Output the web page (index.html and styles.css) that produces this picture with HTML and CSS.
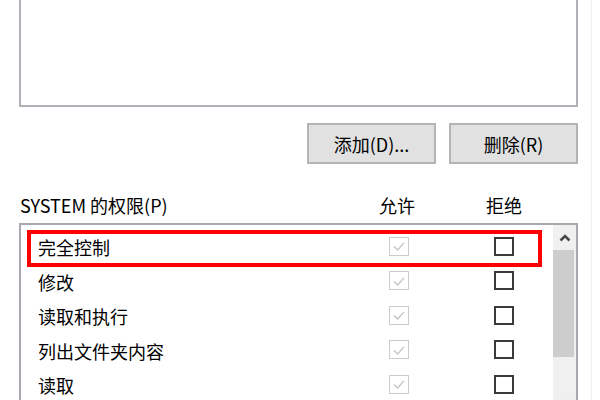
FILE: index.html
```html
<!DOCTYPE html>
<html lang="zh-CN">
<head>
<meta charset="utf-8">
<title>权限</title>
<link rel="stylesheet" href="styles.css">
</head>
<body>
<div class="page">
  <div class="userlist"></div>

  <div class="buttons">
    <div class="btn">添加(D)...</div>
    <div class="btn">删除(R)</div>
  </div>

  <div class="perm-head">
    <div class="perm-title">SYSTEM 的权限(P)</div>
    <div class="perm-col">允许</div>
    <div class="perm-col">拒绝</div>
  </div>

  <div class="permlist">
    <div class="rows">
      <div class="row">
        <div class="name">完全控制</div>
        <span class="cb cb-allow"><svg viewBox="0 0 20 20" width="20" height="20"><polyline points="4.5,10.5 8.5,14.5 15.5,6.5" fill="none" stroke="#c6c6c6" stroke-width="1.6"/></svg></span>
        <span class="cb cb-deny"></span>
      </div>
      <div class="row">
        <div class="name">修改</div>
        <span class="cb cb-allow"><svg viewBox="0 0 20 20" width="20" height="20"><polyline points="4.5,10.5 8.5,14.5 15.5,6.5" fill="none" stroke="#c6c6c6" stroke-width="1.6"/></svg></span>
        <span class="cb cb-deny"></span>
      </div>
      <div class="row">
        <div class="name">读取和执行</div>
        <span class="cb cb-allow"><svg viewBox="0 0 20 20" width="20" height="20"><polyline points="4.5,10.5 8.5,14.5 15.5,6.5" fill="none" stroke="#c6c6c6" stroke-width="1.6"/></svg></span>
        <span class="cb cb-deny"></span>
      </div>
      <div class="row">
        <div class="name">列出文件夹内容</div>
        <span class="cb cb-allow"><svg viewBox="0 0 20 20" width="20" height="20"><polyline points="4.5,10.5 8.5,14.5 15.5,6.5" fill="none" stroke="#c6c6c6" stroke-width="1.6"/></svg></span>
        <span class="cb cb-deny"></span>
      </div>
      <div class="row">
        <div class="name">读取</div>
        <span class="cb cb-allow"><svg viewBox="0 0 20 20" width="20" height="20"><polyline points="4.5,10.5 8.5,14.5 15.5,6.5" fill="none" stroke="#c6c6c6" stroke-width="1.6"/></svg></span>
        <span class="cb cb-deny"></span>
      </div>
    </div>
    <div class="scrollbar">
      <div class="sb-btn"><svg viewBox="0 0 12 8" width="12" height="8"><polyline points="1.5,6.5 6,2 10.5,6.5" fill="none" stroke="#4a4a4a" stroke-width="2.6"/></svg></div>
      <div class="sb-thumb"></div>
      <div class="sb-track"></div>
      <div class="sb-btn"><svg viewBox="0 0 12 8" width="12" height="8"><polyline points="1.5,1.5 6,6 10.5,1.5" fill="none" stroke="#b0b0b0" stroke-width="2.6"/></svg></div>
    </div>
    <div class="highlight"></div>
  </div>
</div>
</body>
</html>
```

FILE: styles.css
```css
html, body {
  margin: 0;
  padding: 0;
  background: #ffffff;
  overflow: hidden;
}

body {
  font-family: "Noto Sans CJK SC", "Noto Sans", sans-serif;
  font-size: 18px;
  color: #000000;
}

.page {
  width: 592px;
  height: 400px;
  border-right: 1px solid #f0f0f0;
  padding-left: 19px;
  box-sizing: border-box;
  overflow: hidden;
}

.userlist {
  width: 559px;
  height: 107px;
  box-sizing: border-box;
  border: 2px solid #b0b0b6;
  border-top: none;
  background: #ffffff;
}

.buttons {
  width: 559px;
  margin-top: 16px;
  display: flex;
  justify-content: flex-end;
  gap: 13px;
}

.btn {
  width: 129px;
  height: 41px;
  box-sizing: border-box;
  background: #e1e1e1;
  border: 2px solid #b4b4b4;
  display: flex;
  align-items: center;
  justify-content: center;
  line-height: 1;
}

.perm-head {
  margin-top: 28px;
  display: grid;
  grid-template-columns: 338px 80px 134px;
  height: 26px;
  line-height: 26px;
}

.perm-title {
  padding-left: 1px;
}

.perm-col {
  text-align: center;
}

.permlist {
  position: relative;
  margin-top: 5px;
  width: 559px;
  height: 192px;
  box-sizing: border-box;
  border: 2px solid #a8a8ae;
  border-bottom: none;
  display: flex;
}

.rows {
  flex: 1;
  padding-top: 4px;
}

.row {
  height: 34.5px;
  display: flex;
  align-items: center;
  padding-left: 17px;
}

.name {
  width: 351px;
  line-height: 1;
  padding-top: 2px;
}

.cb {
  width: 20px;
  height: 19px;
  box-sizing: border-box;
  display: flex;
  align-items: center;
  justify-content: center;
}

.cb svg {
  display: block;
  width: 18px;
  height: 18px;
}

.cb-allow {
  border: 1.5px solid #cccccc;
}

.cb-deny {
  margin-left: 85px;
  border: 2px solid #3a3a3a;
}

.scrollbar {
  width: 23px;
  display: flex;
  flex-direction: column;
  background: #f0f0f0;
}

.sb-btn {
  height: 25px;
  display: flex;
  align-items: center;
  justify-content: center;
}

.sb-btn svg {
  display: block;
}

.sb-thumb {
  height: 107px;
  margin: 0 2px 0 0;
  background: #cdcdcd;
}

.sb-track {
  flex: 1;
}

.highlight {
  position: absolute;
  left: 6px;
  top: 5px;
  width: 515px;
  height: 37px;
  box-sizing: border-box;
  border: 4px solid #ff0000;
  pointer-events: none;
}
```
